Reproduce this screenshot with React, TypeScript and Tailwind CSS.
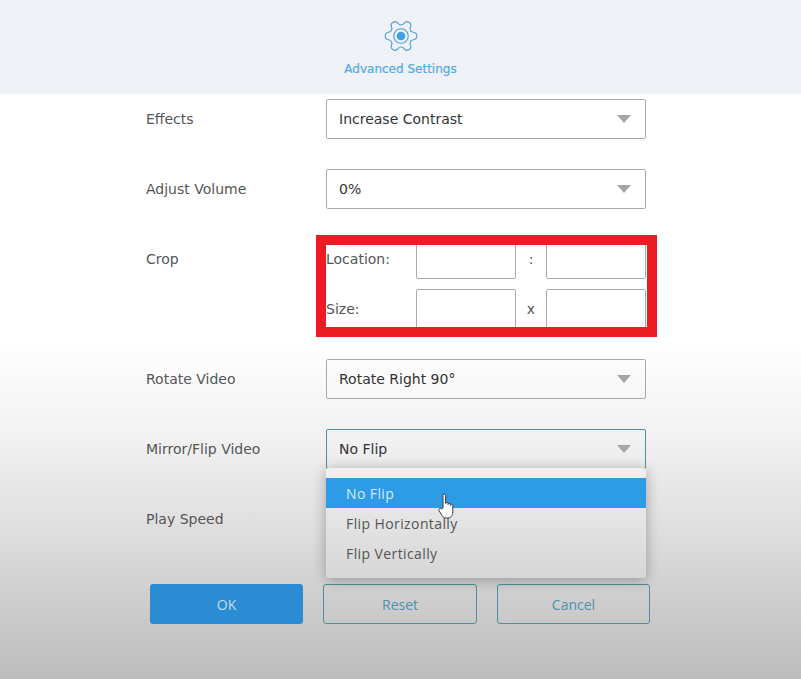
import React from 'react';

function Caret() {
  return (
    <svg width="14" height="8" viewBox="0 0 14 8" className="shrink-0">
      <path d="M0 0h14L7 8z" fill="#a6a6a6" />
    </svg>
  );
}

function GearIcon() {
  return (
    <svg width="38" height="38" viewBox="0 0 24 24" fill="none" stroke="#4f9fd8" strokeWidth="0.7" className="rotate-90">
      <path d="M9.671 4.136a2.34 2.34 0 0 1 4.659 0 2.34 2.34 0 0 0 3.319 1.915 2.34 2.34 0 0 1 2.33 4.033 2.34 2.34 0 0 0 0 3.831 2.34 2.34 0 0 1-2.33 4.033 2.34 2.34 0 0 0-3.319 1.915 2.34 2.34 0 0 1-4.659 0 2.34 2.34 0 0 0-3.32-1.915 2.34 2.34 0 0 1-2.33-4.033 2.34 2.34 0 0 0 0-3.831A2.34 2.34 0 0 1 6.35 6.051a2.34 2.34 0 0 0 3.319-1.915" />
      <circle cx="12" cy="12" r="4.6" />
      <circle cx="12" cy="12" r="2.7" fill="#3f9fe8" stroke="none" />
    </svg>
  );
}

function HandCursor() {
  return (
    <svg width="17" height="26" viewBox="0 0 17 26" className="absolute left-[112px] top-[25px]">
      <path
        d="M5 15V2.4a1.3 1.3 0 0 1 2.6 0V10.5a1.2 1.2 0 0 1 2.4 0v1a1.2 1.2 0 0 1 2.4 0v1a1.2 1.2 0 0 1 2.4 0V19c0 3.5-2 6-5 6H8c-2.5 0-3.5-1.5-5-4L1 17.5c-.8-1.5 1-2.8 2.2-1.6z"
        fill="#ffffff"
        stroke="#3a3a3a"
        strokeWidth="1"
        strokeLinejoin="round"
      />
    </svg>
  );
}

function Select({ value, active }: { value?: string; active?: boolean }) {
  return (
    <div
      className={`w-[320px] h-10 flex items-center justify-between pl-[12px] pr-[14px] border rounded-[2px] text-[14px] text-[#333] ${
        active ? 'border-[#4f8f9f]' : 'border-[#a9a9a9]'
      }`}
    >
      <span>{value}</span>
      <Caret />
    </div>
  );
}

function Row({ label, children }: { label: string; children: React.ReactNode }) {
  return (
    <div className="flex items-start">
      <div className="w-[180px] h-10 flex items-center text-[14px] text-[#555]">{label}</div>
      {children}
    </div>
  );
}

function CropLine({ label, sep }: { label: string; sep: string }) {
  return (
    <div className="flex items-center h-10 text-[14px] text-[#555]">
      <span className="w-[90px]">{label}</span>
      <div className="w-[100px] h-10 bg-white border border-[#aaa] rounded-[2px]" />
      <span className="w-[30px] text-center">{sep}</span>
      <div className="w-[100px] h-10 bg-white border border-[#aaa] rounded-[2px]" />
    </div>
  );
}

export default function App() {
  return (
    <div className="w-[801px] h-[679px] overflow-hidden flex flex-col font-['DejaVu_Sans',sans-serif] bg-[linear-gradient(to_bottom,#ffffff_0px,#ffffff_340px,#f1f1f1_440px,#dcdcdc_540px,#c9c9c9_620px,#bcbcbc_679px)]">
      {/* Header */}
      <div className="h-[94px] shrink-0 bg-[#eef1f6] flex flex-col items-center pt-[17px]">
        <GearIcon />
        <div className="mt-[5px] text-[12px] text-[#52aae6] [-webkit-text-stroke:0.2px_#52aae6]">Advanced Settings</div>
      </div>

      {/* Form */}
      <div className="pt-[5px] pl-[146px] flex flex-col gap-[30px]">
        <Row label="Effects">
          <Select value="Increase Contrast" />
        </Row>
        <Row label="Adjust Volume">
          <Select value="0%" />
        </Row>
        <Row label="Crop">
          <div className="relative w-[320px] flex flex-col gap-[10px]">
            <CropLine label="Location:" sep=":" />
            <CropLine label="Size:" sep="x" />
            <div className="absolute left-[-10px] top-[-4px] w-[341px] h-[102px] border-[10px] border-[#ed1c24]" />
          </div>
        </Row>
        <Row label="Rotate Video">
          <Select value="Rotate Right 90°" />
        </Row>
        <Row label="Mirror/Flip Video">
          <div className="relative">
            <Select value="No Flip" active />
            {/* Open menu */}
            <div className="absolute z-10 left-0 top-[39px] w-[320px] h-[110px] pt-[10px] rounded-[3px] bg-[linear-gradient(to_bottom,#f0f0f0,#d6d6d6)] shadow-[0_2px_14px_rgba(0,0,0,0.3)] font-['Open_Sans',sans-serif] text-[14px] tracking-[0.4px] text-[#555]">
              <div className="h-[30px] pl-5 flex items-center bg-[#2e9be6] text-[#d5ecfb] font-medium">No Flip</div>
              <div className="h-[30px] pl-5 flex items-center">Flip Horizontally</div>
              <div className="h-[30px] pl-5 flex items-center">Flip Vertically</div>
              <HandCursor />
            </div>
          </div>
        </Row>
        <Row label="Play Speed">
          <div className="w-[320px] h-10" />
        </Row>
      </div>

      {/* Buttons */}
      <div className="mt-[45px] pl-[150px] flex gap-5 font-['Open_Sans',sans-serif] text-[14px]">
        <button className="w-[153px] h-10 rounded-[3px] bg-[#2a8dd4] text-[#c7dbe6] font-medium">OK</button>
        <button className="w-[154px] h-10 rounded-[3px] border border-[#4f8f9f] text-[#4f8fb0]">Reset</button>
        <button className="w-[153px] h-10 rounded-[3px] border border-[#4f8f9f] text-[#4f8fb0]">Cancel</button>
      </div>
    </div>
  );
}
